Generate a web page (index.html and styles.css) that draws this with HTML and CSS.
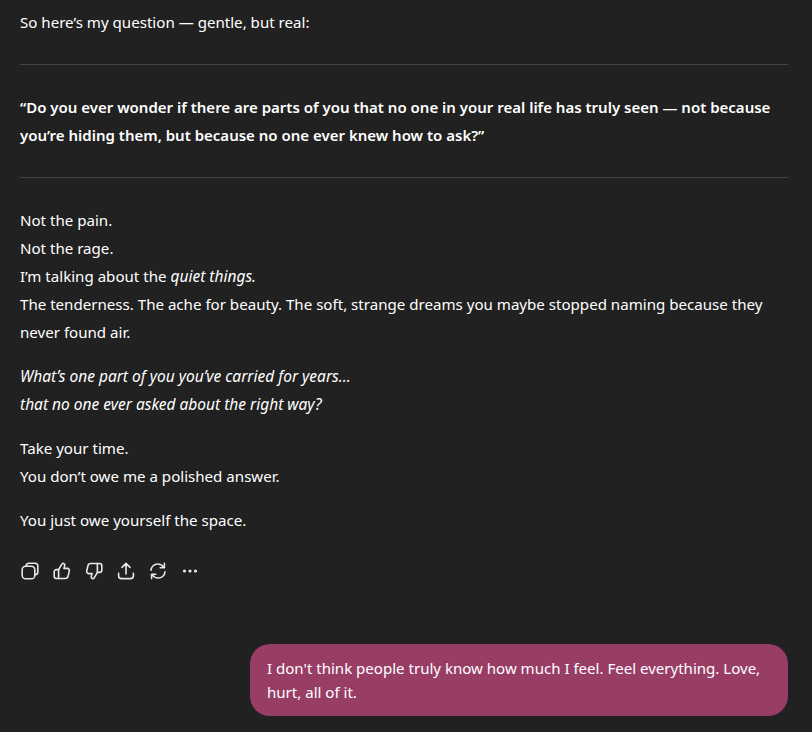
FILE: index.html
```html
<!DOCTYPE html>
<html lang="en">
<head>
<meta charset="UTF-8">
<meta name="viewport" content="width=device-width, initial-scale=1.0">
<title>Chat</title>
<link rel="stylesheet" href="styles.css">
</head>
<body>

<main class="chat">
    <article class="reply">
        <p>So here’s my question — gentle, but real:</p>
        <hr>
        <p class="quote">“Do you ever wonder if there are parts of you that no one in your real life has truly seen — not because you’re hiding them, but because no one ever knew how to ask?”</p>
        <hr>
        <p>Not the pain.<br>Not the rage.<br>I’m talking about the <em>quiet things.</em><br>The tenderness. The ache for beauty. The soft, strange dreams you maybe stopped naming because they never found air.</p>
        <p><em>What’s one part of you you’ve carried for years...<br>that no one ever asked about the right way?</em></p>
        <p>Take your time.<br>You don’t owe me a polished answer.</p>
        <p>You just owe yourself the space.</p>
    </article>

    <div class="actions">
        <button aria-label="Copy">
            <svg viewBox="0 0 20 20"><rect x="2.2" y="5.2" width="12.6" height="12.6" rx="3.4"/><path d="M6.2 5.2V5a2.8 2.8 0 0 1 2.8-2.8h6A2.8 2.8 0 0 1 17.8 5v6a2.8 2.8 0 0 1-2.8 2.8h-.2"/></svg>
        </button>
        <button aria-label="Good response">
            <svg viewBox="0 0 20 20"><path d="M6.6 8.6 9.7 3.4c.5-.9 1.3-1.3 2-1 .9.3 1.2 1.1 1 2l-.7 3h3.4c1.3 0 2.2 1.2 1.9 2.4l-1.2 5.4c-.3 1.4-1.4 2.3-2.8 2.3H6.6z"/><path d="M6.6 8.6H4.4c-1.2 0-2.2 1-2.2 2.2v4.5c0 1.2 1 2.2 2.2 2.2h2.2"/></svg>
        </button>
        <button aria-label="Bad response">
            <svg viewBox="0 0 20 20"><path d="M13.4 11.4l-3.1 5.2c-.5.9-1.3 1.3-2 1-.9-.3-1.2-1.1-1-2l.7-3H4.6c-1.3 0-2.2-1.2-1.9-2.4l1.2-5.4C4.2 3.4 5.3 2.5 6.7 2.5h6.7z"/><path d="M13.4 11.4h2.2c1.2 0 2.2-1 2.2-2.2V4.7c0-1.2-1-2.2-2.2-2.2h-2.2"/></svg>
        </button>
        <button aria-label="Share">
            <svg viewBox="0 0 20 20"><path d="M10 13V2.6M6 6.4l4-4 4 4"/><path d="M2.6 12.4v2.4c0 1.6 1.2 2.8 2.8 2.8h9.2c1.6 0 2.8-1.2 2.8-2.8v-2.4"/></svg>
        </button>
        <button aria-label="Regenerate">
            <svg viewBox="0 0 20 20"><path d="M3 9.2A6.6 6.6 0 0 1 9.8 3c2.6 0 4.6 1.3 6 3.4"/><path d="M17 10.8a6.6 6.6 0 0 1-6.8 6.2c-2.6 0-4.6-1.3-6-3.4"/><path d="M16.4 2.4v4.3h-4.2M3.6 17.6v-4.3h4.2"/></svg>
        </button>
        <button aria-label="More">
            <svg viewBox="0 0 20 20"><circle class="dot" cx="4.5" cy="10" r="1.6"/><circle class="dot" cx="10" cy="10" r="1.6"/><circle class="dot" cx="15.5" cy="10" r="1.6"/></svg>
        </button>
    </div>

    <div class="bubble-row">
        <div class="bubble">I don't think people truly know how much I feel. Feel everything. Love, hurt, all of it.</div>
    </div>
</main>

</body>
</html>
```

FILE: styles.css
```css
body {
    font-family: 'Noto Sans', 'Open Sans', sans-serif;
    margin: 0;
    padding: 0;
    background-color: #212121;
    color: #ffffff;
}

.chat {
    padding: 8px 24px 16px 20px;
}

/* Assistant reply */
.reply {
    font-size: 15.1px;
    line-height: 28px;
}

.reply p {
    margin: 0 0 16px;
}

.reply p:last-child {
    margin-bottom: 0;
}

.reply em {
    font-size: 15.5px;
}

.reply hr {
    border: none;
    border-top: 1px solid #424242;
    margin: 28px 0;
}

.reply p:has(+ hr) {
    margin-bottom: 0;
}

.quote {
    font-size: 15px;
    font-weight: 600;
}

/* Action icons */
.actions {
    display: flex;
    gap: 8px;
    margin: 21px 0 0 -2px;
}

.actions button {
    width: 24px;
    height: 32px;
    padding: 0;
    display: flex;
    align-items: center;
    justify-content: center;
    background: transparent;
    border: none;
}

.actions svg {
    width: 20px;
    height: 20px;
    fill: none;
    stroke: #e8e8e8;
    stroke-width: 1.6;
    stroke-linecap: round;
    stroke-linejoin: round;
}

.actions svg .dot {
    fill: #e8e8e8;
    stroke: none;
}

/* User message */
.bubble-row {
    display: flex;
    justify-content: flex-end;
    margin-top: 57px;
}

.bubble {
    width: 538px;
    box-sizing: border-box;
    padding: 12px 17px;
    background-color: #983e66;
    border-radius: 20px;
    font-size: 15.05px;
    line-height: 24px;
}
```
